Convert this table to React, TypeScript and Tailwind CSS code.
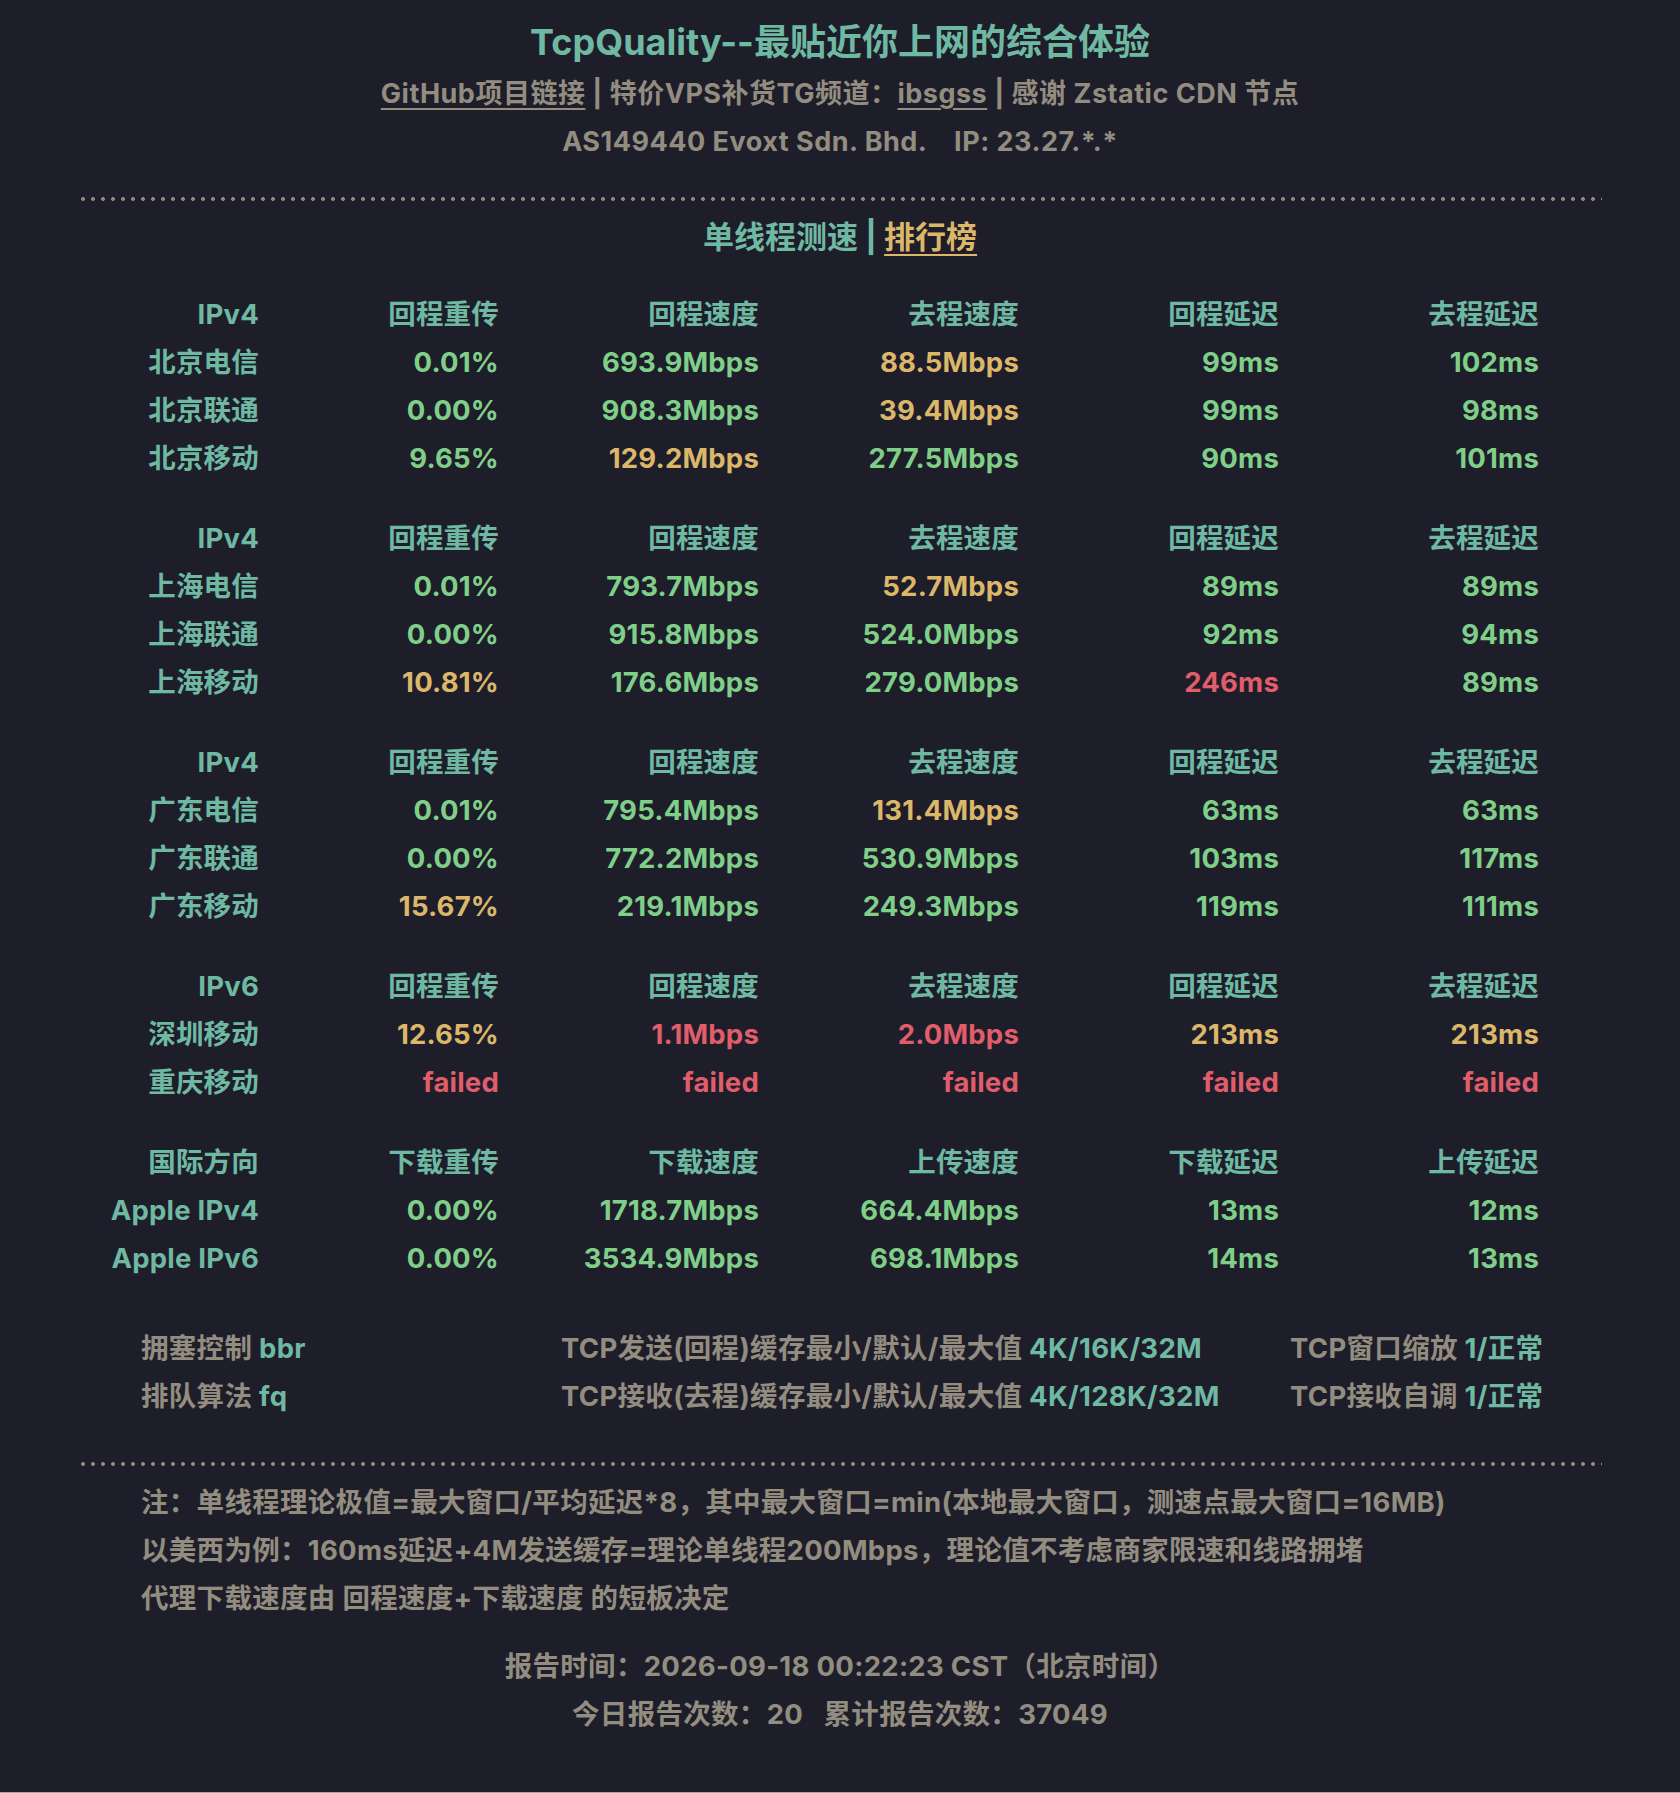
import React from "react";

const TEAL = "text-[#6fb9a2]";
const G = "text-[#7fcf89]";
const Y = "text-[#dcb76a]";
const R = "text-[#e05d6a]";

type Cell = [string, string];
type Group = { head: string[]; rows: { label: string; cells: Cell[] }[] };

const g = (v: string): Cell => [v, G];
const y = (v: string): Cell => [v, Y];
const r = (v: string): Cell => [v, R];

const H4 = ["IPv4", "回程重传", "回程速度", "去程速度", "回程延迟", "去程延迟"];

const groups: Group[] = [
  {
    head: H4,
    rows: [
      { label: "北京电信", cells: [g("0.01%"), g("693.9Mbps"), y("88.5Mbps"), g("99ms"), g("102ms")] },
      { label: "北京联通", cells: [g("0.00%"), g("908.3Mbps"), y("39.4Mbps"), g("99ms"), g("98ms")] },
      { label: "北京移动", cells: [g("9.65%"), y("129.2Mbps"), g("277.5Mbps"), g("90ms"), g("101ms")] },
    ],
  },
  {
    head: H4,
    rows: [
      { label: "上海电信", cells: [g("0.01%"), g("793.7Mbps"), y("52.7Mbps"), g("89ms"), g("89ms")] },
      { label: "上海联通", cells: [g("0.00%"), g("915.8Mbps"), g("524.0Mbps"), g("92ms"), g("94ms")] },
      { label: "上海移动", cells: [y("10.81%"), g("176.6Mbps"), g("279.0Mbps"), r("246ms"), g("89ms")] },
    ],
  },
  {
    head: H4,
    rows: [
      { label: "广东电信", cells: [g("0.01%"), g("795.4Mbps"), y("131.4Mbps"), g("63ms"), g("63ms")] },
      { label: "广东联通", cells: [g("0.00%"), g("772.2Mbps"), g("530.9Mbps"), g("103ms"), g("117ms")] },
      { label: "广东移动", cells: [y("15.67%"), g("219.1Mbps"), g("249.3Mbps"), g("119ms"), g("111ms")] },
    ],
  },
  {
    head: ["IPv6", "回程重传", "回程速度", "去程速度", "回程延迟", "去程延迟"],
    rows: [
      { label: "深圳移动", cells: [y("12.65%"), r("1.1Mbps"), r("2.0Mbps"), y("213ms"), y("213ms")] },
      { label: "重庆移动", cells: [r("failed"), r("failed"), r("failed"), r("failed"), r("failed")] },
    ],
  },
  {
    head: ["国际方向", "下载重传", "下载速度", "上传速度", "下载延迟", "上传延迟"],
    rows: [
      { label: "Apple IPv4", cells: [g("0.00%"), g("1718.7Mbps"), g("664.4Mbps"), g("13ms"), g("12ms")] },
      { label: "Apple IPv6", cells: [g("0.00%"), g("3534.9Mbps"), g("698.1Mbps"), g("14ms"), g("13ms")] },
    ],
  },
];

function Dots() {
  return (
    <div className="mx-auto w-[1524px] h-[4px] bg-[radial-gradient(circle,#8d887d_1.7px,transparent_2.2px)] bg-size-[10px_4px] bg-repeat-x" />
  );
}

export default function App() {
  return (
    <div className="w-full h-[1793px] bg-[#1e1e2b] border-b border-[#a6a6a6] font-['Inter','Noto_Sans_CJK_SC',sans-serif] font-bold text-[#938d80] overflow-hidden">
      <div className="pt-[18px] flex flex-col items-center">
        <div className={`text-[36px] leading-[48px] ${TEAL}`}>TcpQuality--最贴近你上网的综合体验</div>
        <div className="mt-[4px] text-[27px] leading-[48px] tracking-[0.5px] whitespace-pre">
          <span className="underline decoration-2 underline-offset-[5px]">GitHub项目链接</span>
          <span> | </span>
          <span>特价VPS补货TG频道：</span>
          <span className="underline decoration-2 underline-offset-[5px]">ibsgss</span>
          <span> | </span>
          <span>感谢 Zstatic CDN 节点</span>
        </div>
        <div className="text-[27px] leading-[48px] tracking-[0.5px] whitespace-pre">AS149440 Evoxt Sdn. Bhd.    IP: 23.27.*.*</div>
      </div>

      <div className="mt-[31px]">
        <Dots />
      </div>

      <div className={`mt-[12px] text-center text-[31px] leading-[48px] whitespace-pre ${TEAL}`}>
        <span>单线程测速 | </span>
        <span className={`${Y} underline decoration-2 underline-offset-[6px]`}>排行榜</span>
      </div>

      <div className="mt-[29px] flex flex-col gap-[32px] text-[27.5px] leading-[48px] tracking-[0.2px]">
        {groups.map((grp, gi) => (
          <div key={gi} className="grid grid-cols-[259px_240px_260px_260px_260px_260px] text-right">
            {grp.head.map((h, i) => (
              <div key={i} className={TEAL}>
                {h}
              </div>
            ))}
            {grp.rows.map((row, ri) => (
              <React.Fragment key={ri}>
                <div className={TEAL}>{row.label}</div>
                {row.cells.map((c, ci) => (
                  <div key={ci} className={c[1]}>
                    {c[0]}
                  </div>
                ))}
              </React.Fragment>
            ))}
          </div>
        ))}
      </div>

      <div className="mt-[42px] pl-[141px] grid grid-cols-[420px_729px_auto] text-[27.5px] leading-[48px] tracking-[0.3px] whitespace-pre">
        <div>
          拥塞控制 <span className={TEAL}>bbr</span>
        </div>
        <div>
          TCP发送(回程)缓存最小/默认/最大值 <span className={TEAL}>4K/16K/32M</span>
        </div>
        <div>
          TCP窗口缩放 <span className={TEAL}>1/正常</span>
        </div>
        <div>
          排队算法 <span className={TEAL}>fq</span>
        </div>
        <div>
          TCP接收(去程)缓存最小/默认/最大值 <span className={TEAL}>4K/128K/32M</span>
        </div>
        <div>
          TCP接收自调 <span className={TEAL}>1/正常</span>
        </div>
      </div>

      <div className="mt-[42px]">
        <Dots />
      </div>

      <div className="mt-[12px] pl-[141px] text-[27.5px] leading-[48px] tracking-[0.3px]">
        <div>注：单线程理论极值=最大窗口/平均延迟*8，其中最大窗口=min(本地最大窗口，测速点最大窗口=16MB)</div>
        <div>以美西为例：160ms延迟+4M发送缓存=理论单线程200Mbps，理论值不考虑商家限速和线路拥堵</div>
        <div>代理下载速度由 回程速度+下载速度 的短板决定</div>
      </div>

      <div className="mt-[20px] text-center text-[27.5px] leading-[48px] tracking-[0.3px] whitespace-pre">
        <div>报告时间：2026-09-18 00:22:23 CST（北京时间）</div>
        <div>今日报告次数：20   累计报告次数：37049</div>
      </div>
    </div>
  );
}
